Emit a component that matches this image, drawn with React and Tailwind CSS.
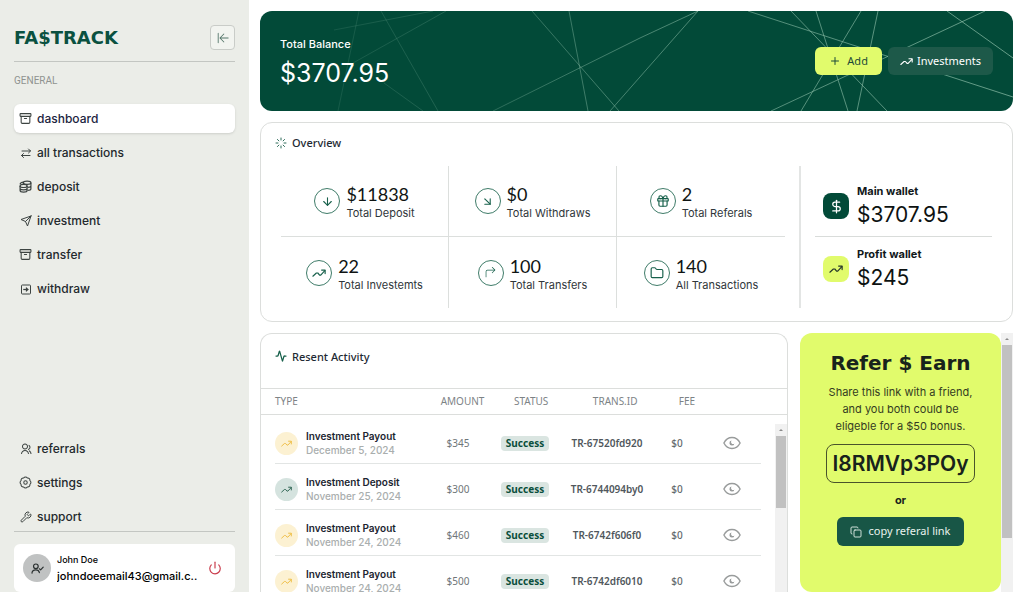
import {
  Activity, Archive, ArrowDown, ArrowDownRight, Copy, DollarSign, Folder,
  Gift, Loader, Plus, Power, Wrench,
} from "lucide-react";
import { PiArrowLineLeft } from "react-icons/pi";
import { RiGroupLine } from "react-icons/ri";
import { FiSend } from "react-icons/fi";
import { BsArrow90DegRight } from "react-icons/bs";

const line = { size: 13, strokeWidth: 2 };

function ZigZag({ size }) {
  return (
    <svg width={size} height={size} viewBox="0 0 24 24" fill="none" stroke="currentColor" strokeWidth="2" strokeLinecap="round" strokeLinejoin="round" aria-hidden="true">
      <path d="M1.5 17.5 L7.5 12 L10 12 L13 15.5 L15 15.5 L22 8" />
      <path d="M16.5 7 H22.5 V13" />
    </svg>
  );
}

function Swap() {
  return (
    <svg width="12" height="12" viewBox="0 0 24 24" fill="none" stroke="currentColor" strokeWidth="2" strokeLinecap="round" strokeLinejoin="round" aria-hidden="true">
      <path d="M4 8 H21 M17 4 L21 8 L17 12" />
      <path d="M20 17 H3 M7 13 L3 17 L7 21" />
    </svg>
  );
}

function Coins() {
  return (
    <svg width="13" height="13" viewBox="0 0 24 24" fill="none" stroke="currentColor" strokeWidth="2.2" aria-hidden="true">
      <ellipse cx="15" cy="5" rx="7" ry="3" />
      <path d="M8 5 V9 M22 5 V16 C22 17.5 19 19 16 19 M22 10.5 C22 12 19 13.5 16 13.5" />
      <ellipse cx="8.5" cy="11" rx="6.5" ry="2.8" />
      <path d="M2 11 V19.5 C2 21 5 22.5 8.5 22.5 C12 22.5 15 21 15 19.5 V11 M2 15.3 C2 17 5 18.2 8.5 18.2 C12 18.2 15 17 15 15.3 M2 8 C2 6 5 4 8 4" />
    </svg>
  );
}

function Enter() {
  return (
    <svg width="12" height="12" viewBox="0 0 24 24" fill="none" stroke="currentColor" strokeWidth="2" strokeLinejoin="round" aria-hidden="true">
      <rect x="3" y="4" width="18" height="18" rx="1.5" />
      <path d="M6.5 13 H13" strokeWidth="2.5" />
      <path d="M12 8.5 L17.5 13 L12 17.5 Z" fill="currentColor" strokeWidth="0.5" />
    </svg>
  );
}

function Gear() {
  return (
    <svg width="13" height="13" viewBox="0 0 24 24" fill="none" stroke="currentColor" strokeWidth="1.9" strokeLinejoin="round" aria-hidden="true">
      <path d="M3.85 8.62a4 4 0 0 1 4.78-4.77 4 4 0 0 1 6.74 0 4 4 0 0 1 4.78 4.78 4 4 0 0 1 0 6.74 4 4 0 0 1-4.77 4.78 4 4 0 0 1-6.75 0 4 4 0 0 1-4.78-4.77 4 4 0 0 1 0-6.76Z" />
      <circle cx="12" cy="12" r="3.2" />
    </svg>
  );
}

function UserMark() {
  return (
    <svg width="13" height="13" viewBox="0 0 24 24" fill="none" stroke="currentColor" strokeWidth="2.2" strokeLinecap="round" strokeLinejoin="round" aria-hidden="true">
      <circle cx="9" cy="8" r="4.3" />
      <path d="M1.8 20.5 C2 16.5 5 14.5 9 14.5 C12.5 14.5 14.8 16.5 15.5 19.5" />
      <path d="M15.5 12.5 L17.8 14.5 L22.5 9.5" />
    </svg>
  );
}

function Eye() {
  return (
    <svg width="18" height="14" viewBox="0 0 18 14" fill="none" stroke="currentColor" strokeWidth="1.4" aria-hidden="true">
      <path d="M0.9 7 C3 2.8 6 1.5 9 1.5 C12 1.5 15 2.8 17.1 7 C15 11.2 12 12.5 9 12.5 C6 12.5 3 11.2 0.9 7 Z" />
      <path d="M8.6 4.6 A2.5 2.5 0 1 0 11.4 7.4 A1.9 1.9 0 0 1 8.6 4.6 Z" fill="currentColor" stroke="none" />
    </svg>
  );
}

const primary = [
  { label: "dashboard", icon: <Archive {...line} />, active: true },
  { label: "all transactions", icon: <Swap /> },
  { label: "deposit", icon: <Coins /> },
  { label: "investment", icon: <FiSend size={12} /> },
  { label: "transfer", icon: <Archive {...line} /> },
  { label: "withdraw", icon: <Enter /> },
];

const secondary = [
  { label: "referrals", icon: <RiGroupLine size={12} /> },
  { label: "settings", icon: <Gear /> },
  { label: "support", icon: <Wrench {...line} size={12} /> },
];

function NavList({ items }) {
  return (
    <ul className="flex flex-col gap-[5px]">
      {items.map((item) => (
        <li key={item.label}>
          <a
            href="#"
            className={
              item.active
                ? "flex h-[29px] items-center gap-[5px] rounded-md bg-white px-[5px] text-[#1c2440] shadow-sm"
                : "flex h-[29px] items-center gap-[5px] px-[5px] text-[#23292d]"
            }
          >
            <span className="flex w-[13px] justify-center text-[#3d4442]">{item.icon}</span>
            <span className="text-xs font-medium">{item.label}</span>
          </a>
        </li>
      ))}
    </ul>
  );
}

function Sidebar() {
  return (
    <aside className="flex w-[249px] shrink-0 flex-col bg-[#ebede8] px-[14px] pt-[25px]">
      <div className="flex items-center justify-between border-b border-[#c3c6c2] pb-[11px]">
        <span className="font-['DejaVu_Sans',sans-serif] text-lg leading-6 font-bold text-[#0a5140]">FA$TRACK</span>
        <button aria-label="Collapse menu" className="flex size-[25px] items-center justify-center rounded border border-[#c9ccc8] bg-[#f2f4f0] text-[#527468]">
          <PiArrowLineLeft size={14} />
        </button>
      </div>
      <p className="mt-[11px] font-[Roboto,sans-serif] text-[10px] leading-4 text-[#8f9390]">GENERAL</p>
      <nav className="mt-[15px] flex flex-1 flex-col justify-between">
        <NavList items={primary} />
        <NavList items={secondary} />
      </nav>
      <div className="border-t border-[#c3c6c2] pt-3">
        <div className="flex h-[48px] items-center rounded-md bg-white pr-[13px] pl-[9px]">
          <span className="flex size-7 shrink-0 items-center justify-center rounded-full bg-[#c0c2c2] text-[#2a3030]">
            <UserMark />
          </span>
          <div className="ml-[6px] min-w-0 flex-1">
            <p className="text-[9px] leading-4 font-medium text-black">John Doe</p>
            <p className="truncate text-[11px] leading-4 font-medium text-black">johndoeemail43@gmail.c..</p>
          </div>
          <button aria-label="Sign out" className="text-[#c93b4b]">
            <Power size={14} strokeWidth={2} />
          </button>
        </div>
      </div>
    </aside>
  );
}

function Banner() {
  return (
    <section className="relative flex h-[100px] shrink-0 items-center justify-between overflow-hidden rounded-xl bg-[#024a38] px-5">
      <svg className="absolute inset-0 size-full" viewBox="0 0 753 100" preserveAspectRatio="xMidYMid slice" fill="none" aria-hidden="true">
        <defs>
          <linearGradient id="fade" gradientUnits="userSpaceOnUse" x1="0" y1="0" x2="753" y2="0">
            <stop offset="0" stopColor="#8fc0aa" stopOpacity="0.08" />
            <stop offset="0.25" stopColor="#8fc0aa" stopOpacity="0.22" />
            <stop offset="0.5" stopColor="#8fc0aa" stopOpacity="0.5" />
            <stop offset="1" stopColor="#8fc0aa" stopOpacity="0.7" />
          </linearGradient>
        </defs>
        <path
          stroke="url(#fade)"
          d="M74 19L173 0M93 52L186 0M121 0L178 100M99 0L78 100M124 72L163 100M272 0L359 100M309 0L328 100M233 100L380 27L438 0M350 100L438 0M488 0L753 86M531 0L627 100M556 0L588 100M601 0L541 100M618 0L597 100M725 0L511 100M687 0L753 47"
        />
      </svg>
      <div className="relative pt-[2px] text-white">
        <p className="text-[11px] leading-4 font-medium">Total Balance</p>
        <p className="mt-[5px] text-[25px] leading-8">$3707.95</p>
      </div>
      <div className="relative flex gap-[6px] font-['Noto_Sans',sans-serif] text-[11px]">
        <button className="flex h-7 items-center gap-[6px] rounded-md bg-[#e1fb6c] px-[14px] text-[#1d4a38]">
          <Plus size={12} strokeWidth={2} /> Add
        </button>
        <button className="flex h-7 items-center gap-1 rounded-md bg-[#1d5949] px-3 text-white">
          <ZigZag size={13} /> Investments
        </button>
      </div>
    </section>
  );
}

const stats = [
  { value: "$11838", label: "Total Deposit", icon: <ArrowDown {...line} /> },
  { value: "$0", label: "Total Withdraws", icon: <ArrowDownRight {...line} /> },
  { value: "2", label: "Total Referals", icon: <Gift {...line} size={14} /> },
  { value: "22", label: "Total Investemts", icon: <ZigZag size={14} /> },
  { value: "100", label: "Total Transfers", icon: <BsArrow90DegRight size={11} /> },
  { value: "140", label: "All Transactions", icon: <Folder {...line} size={14} /> },
];

const wallets = [
  { name: "Main wallet", value: "$3707.95", icon: <DollarSign size={15} strokeWidth={2} />, box: "flex size-[26px] items-center justify-center rounded-lg bg-[#024a38] text-white" },
  { name: "Profit wallet", value: "$245", icon: <ZigZag size={14} />, box: "flex size-[26px] items-center justify-center rounded-lg bg-[#e1fb6c] text-[#24352a]" },
];

function Overview() {
  return (
    <section className="h-[200px] shrink-0 rounded-xl border border-[#dcdedc] px-5 pt-3">
      <h2 className="-ml-[6px] flex h-4 items-center gap-[5px] font-['Noto_Sans',sans-serif] text-[11px] font-medium text-[#1e2a33]">
        <Loader size={12} strokeWidth={2} className="text-[#2e6c5a]" /> Overview
      </h2>
      <div className="mt-[15px] flex h-[142px]">
        <ul className="grid flex-[504] grid-cols-3 grid-rows-2">
          {stats.map((s, i) => (
            <li
              key={s.label}
              className={
                "flex items-center justify-center gap-[6px] border-[#dcdfdd]" +
                (i % 3 < 2 ? " border-r" : "") +
                (i < 3 ? " border-b" : "")
              }
            >
              <span className="flex size-[26px] shrink-0 items-center justify-center rounded-full border border-[#3f7c69] text-[#17604b]">{s.icon}</span>
              <div>
                <p className="font-[Lato,sans-serif] text-lg leading-6 text-[#0f1413]">{s.value}</p>
                <p className="text-[11px] leading-[14px] whitespace-nowrap text-[#30363a]">{s.label}</p>
              </div>
            </li>
          ))}
        </ul>
        <div className="mx-[14px] w-[2px] bg-[#e3e5e4]" />
        <ul className="grid flex-[177] grid-rows-2">
          {wallets.map((w, i) => (
            <li key={w.name} className={"flex items-center gap-2 border-[#d9dcda] pl-2" + (i === 0 ? " border-b pt-[10px]" : " pb-2")}>
              <span className={w.box}>{w.icon}</span>
              <div>
                <p className="text-[11px] leading-[18px] font-bold text-[#11181a]">{w.name}</p>
                <p className="text-[21px] leading-[30px] text-[#0d1211]">{w.value}</p>
              </div>
            </li>
          ))}
        </ul>
      </div>
    </section>
  );
}

const rows = [
  { type: "Investment Payout", date: "December 5, 2024", amount: "$345", id: "TR-67520fd920", tone: "gold" },
  { type: "Investment Deposit", date: "November 25, 2024", amount: "$300", id: "TR-6744094by0", tone: "green" },
  { type: "Investment Payout", date: "November 24, 2024", amount: "$460", id: "TR-6742f606f0", tone: "gold" },
  { type: "Investment Payout", date: "November 24, 2024", amount: "$500", id: "TR-6742df6010", tone: "gold" },
];

const columns = "grid grid-cols-[153fr_60fr_74fr_90fr_50fr_59fr] items-center text-center";

function Scrollbar({ thumb }) {
  return (
    <div className="flex h-full w-3 flex-col items-center bg-[#f1f1f1]" aria-hidden="true">
      <svg width="12" height="12" viewBox="0 0 12 12"><path d="M4 7 L6 5 L8 7 Z" fill="#8a8a8a" /></svg>
      <div className={thumb} />
    </div>
  );
}

function ActivityPanel() {
  return (
    <section className="relative min-w-0 flex-[526] overflow-hidden rounded-t-xl border border-b-0 border-[#dcdedc] font-['Noto_Sans',sans-serif]">
      <h2 className="flex h-[54px] items-start gap-[5px] px-[14px] pt-[14px] text-[11px] leading-[18px] font-medium text-[#1e2a33]">
        <Activity size={12} strokeWidth={2.5} className="mt-[2px] text-[#17604b]" /> Resent Activity
      </h2>
      <table className="block">
        <thead className="block border-y border-[#dcdedc] pr-[14px] pl-[14px]">
          <tr className={columns + " h-[25px] text-[10px] text-[#7d8386]"}>
            <th className="text-left font-normal">TYPE</th>
            <th className="font-normal">AMOUNT</th>
            <th className="font-normal">STATUS</th>
            <th className="font-normal">TRANS.ID</th>
            <th className="font-normal">FEE</th>
            <th aria-label="View" />
          </tr>
        </thead>
        <tbody className="block pt-[3px] pr-[26px] pl-[14px]">
          {rows.map((r) => (
            <tr key={r.id} className={columns + " h-[46px] border-b border-[#e2e5e4] pt-[5px]"}>
              <td className="flex items-center gap-2 text-left font-[Inter,sans-serif]">
                <span className={r.tone === "gold"
                  ? "flex size-[23px] shrink-0 items-center justify-center rounded-full bg-[#fcf1d2] text-[#edbb3e]"
                  : "flex size-[23px] shrink-0 items-center justify-center rounded-full bg-[#d5e3df] text-[#245d4c]"}>
                  <ZigZag size={11} />
                </span>
                <div className="whitespace-nowrap">
                  <p className="text-[10px] leading-[14px] font-semibold text-[#1b2530]">{r.type}</p>
                  <p className="text-[10px] leading-[14px] font-medium text-[#a9aeae]">{r.date}</p>
                </div>
              </td>
              <td className="text-[10px] text-[#6f7679]">{r.amount}</td>
              <td className="flex justify-center">
                <span className="rounded-sm bg-[#dae5e1] px-[5px] text-[10px] leading-[15px] font-bold text-[#0b4f3c]">Success</span>
              </td>
              <td className="text-[10px] font-semibold text-[#50575c]">{r.id}</td>
              <td className="text-[10px] font-medium text-[#62696d]">$0</td>
              <td className="flex justify-center">
                <button aria-label={"View " + r.id} className="text-[#999c9c]"><Eye /></button>
              </td>
            </tr>
          ))}
        </tbody>
      </table>
      <div className="absolute top-[90px] right-0 bottom-0">
        <Scrollbar thumb="h-[72px] w-[10px] bg-[#c1c1c1]" />
      </div>
    </section>
  );
}

function Refer() {
  return (
    <section className="flex min-w-0 flex-[213]">
      <div className="flex flex-1 flex-col items-center rounded-xl bg-[#e1fb6c] pt-[18px] text-center text-[#18231c]">
        <h2 className="font-['DejaVu_Sans',sans-serif] text-xl leading-6 font-bold">Refer $ Earn</h2>
        <p className="mt-[9px] text-[11px] leading-[17px] text-[#343c22]">
          Share this link with a friend,<br />and you both could be<br />eligeble for a $50 bonus.
        </p>
        <p className="mt-[9px] flex h-[39px] items-center rounded-lg border border-[#4a532b] px-[5px] text-[21px] font-semibold">I8RMVp3POy</p>
        <p className="mt-2 text-[11px] leading-[18px] font-bold">or</p>
        <button className="mt-2 flex h-[29px] items-center gap-[6px] rounded-md bg-[#185646] px-[13px] font-['Noto_Sans',sans-serif] text-[11px] text-[#e9f3ee]">
          <Copy size={12} strokeWidth={1.75} /> copy referal link
        </button>
      </div>
      <Scrollbar thumb="h-[193px] w-[10px] bg-[#c1c1c1]" />
    </section>
  );
}

export default function App() {
  return (
    <div className="flex h-screen overflow-hidden bg-white font-[Inter,sans-serif]">
      <Sidebar />
      <main className="flex min-w-0 flex-1 flex-col gap-[11px] px-[11px] pt-[11px]">
        <Banner />
        <Overview />
        <div className="flex min-h-0 flex-1 gap-3">
          <ActivityPanel />
          <Refer />
        </div>
      </main>
    </div>
  );
}
